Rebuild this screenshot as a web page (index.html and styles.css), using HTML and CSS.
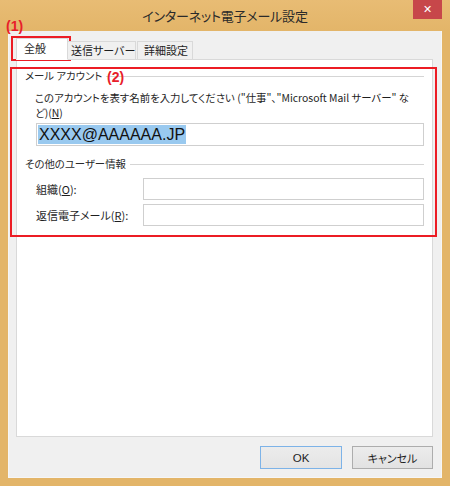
FILE: index.html
```html
<!DOCTYPE html>
<html lang="ja">
<head>
<meta charset="utf-8">
<link rel="stylesheet" href="styles.css">
</head>
<body>
<div class="window">
  <div class="titlebar">
    <span class="title">インターネット電子メール設定</span>
    <div class="close">✕</div>
  </div>
  <div class="client">
    <div class="tabs">
      <div class="tab sel">全般</div>
      <div class="tab t2">送信サーバー</div>
      <div class="tab t3">詳細設定</div>
    </div>
    <div class="panel">
      <div class="group-head"><span class="gl">メール アカウント</span><span class="line"></span></div>
      <div class="desc">このアカウントを表す名前を入力してください ("仕事"、"Microsoft Mail サーバー" な<br>ど)(<u>N</u>)</div>
      <div class="input big"><span class="selection">XXXX@AAAAAA.JP</span></div>
      <div class="group-head g2"><span class="gl">その他のユーザー情報</span><span class="line"></span></div>
      <div class="row r1"><span class="lbl">組織(<u>O</u>):</span><div class="input small"></div></div>
      <div class="row r2"><span class="lbl">返信電子メール(<u>R</u>):</span><div class="input small"></div></div>
    </div>
    <div class="buttons">
      <div class="btn ok">OK</div>
      <div class="btn cancel">キャンセル</div>
    </div>
  </div>
  <div class="anno a1">(1)</div>
  <div class="anno a2">(2)</div>
  <div class="redbox rb1"></div>
  <div class="redbox rb2"></div>
</div>
</body>
</html>
```
FILE: styles.css
```css
* { box-sizing: border-box; }
html, body { margin: 0; padding: 0; }
body {
  width: 450px;
  height: 486px;
  overflow: hidden;
  font-family: "Noto Sans CJK JP", "Liberation Sans", sans-serif;
  font-feature-settings: "palt";
  color: #1e1e1e;
  background: #e3b569;
}
.window {
  position: relative;
  width: 450px;
  height: 486px;
  background: #e3b569;
  padding: 0 8px 8px 8px;
  display: flex;
  flex-direction: column;
}
.titlebar {
  height: 31px;
  display: flex;
  align-items: center;
  justify-content: center;
  position: relative;
  background: linear-gradient(#e8bc74, #e3b569);
  margin: 0 -8px;
}
.title {
  font-size: 13px;
  letter-spacing: -0.2px;
  color: #2a2a2a;
  margin-top: -1px;
}
.close {
  position: absolute;
  right: 8px;
  top: 0;
  width: 29px;
  height: 19px;
  background: #c7474a;
  color: #fff;
  font-size: 11px;
  font-weight: bold;
  display: flex;
  align-items: center;
  justify-content: center;
  font-family: "DejaVu Sans", sans-serif;
}
.client {
  flex: 1;
  background: #f0f0f0;
  border: 1px solid #f6f6f6;
  border-top: none;
  display: flex;
  flex-direction: column;
  padding: 6px 8px 0 7px;
}
.tabs {
  display: flex;
  align-items: flex-end;
  margin-bottom: -1px;
  position: relative;
  z-index: 1;
  height: 23px;
  padding-top: 1px;
}
.tab {
  font-size: 11px;
  white-space: nowrap;
  border: 1px solid #d9d9d9;
  background: #f0f0f0;
  height: 19px;
  display: flex;
  align-items: center;
  line-height: 1;
}
.tab.sel {
  width: 52px;
  height: 22px;
  background: #fff;
  border-bottom: 1px solid #fff;
  padding-left: 7px;
  padding-bottom: 1px;
}
.tab.t2 { width: 68px; padding-left: 3px; border-left: none; }
.tab.t3 { width: 56px; padding-left: 6px; margin-left: 1px; }
.panel {
  height: 378px;
  background: #fff;
  border: 1px solid #d9d9d9;
  padding: 9px 8px 0 8px;
  display: flex;
  flex-direction: column;
}
.group-head {
  display: flex;
  align-items: center;
  height: 14px;
  font-size: 10.4px;
  line-height: 14px;
  white-space: nowrap;
}
.group-head .gl { padding-right: 4px; color: #2a2a2a; }
.group-head .line { flex: 1; height: 1px; background: #d5d5d5; }
.group-head.g2 { margin-top: 11px; }
.desc {
  margin: 7px 0 0 10px;
  font-size: 10.4px;
  line-height: 15px;
  white-space: nowrap;
}
.input {
  background: #fff;
  border: 1px solid #cfcfcf;
}
.input.big {
  margin: 3px 0 0 11px;
  height: 23px;
  padding: 1px 0 0 1px;
  display: flex;
}
.selection {
  background: #99c9ef;
  color: #111;
  font-family: "Liberation Sans", sans-serif;
  font-size: 16px;
  line-height: 19px;
  height: 19px;
  padding: 0 1px;
}
.row {
  display: flex;
  align-items: center;
  margin-left: 11px;
  font-size: 11px;
  white-space: nowrap;
}
.row.r1 { margin-top: 7px; }
.row.r2 { margin-top: 4px; }
.lbl { width: 107px; }
.input.small { flex: 1; height: 22px; }
.buttons {
  display: flex;
  justify-content: flex-end;
  gap: 10px;
  margin-top: 9px;
}
.btn {
  height: 23px;
  width: 82px;
  display: flex;
  align-items: center;
  justify-content: center;
  font-size: 11px;
  background: linear-gradient(#ececec, #e2e2e2);
  border: 1px solid #adadad;
}
.btn.ok { border: 1px solid #7db3e8; background: linear-gradient(#ececec, #e4e4e4); font-family: "Liberation Sans", "Noto Sans CJK JP", sans-serif; font-size: 11.5px; }
.btn.cancel { width: 81px; }
.anno {
  position: absolute;
  color: #e8202a;
  font-weight: bold;
  font-family: "Liberation Sans", sans-serif;
  font-size: 14px;
  line-height: 14px;
}
.a1 { left: 6px; top: 19px; }
.a2 { left: 107px; top: 70px; }
.redbox {
  position: absolute;
  border: 2px solid #ec1c24;
}
.rb1 { left: 11px; top: 36px; width: 60px; height: 25px; }
.rb2 { left: 10px; top: 67px; width: 427px; height: 170px; }
```
